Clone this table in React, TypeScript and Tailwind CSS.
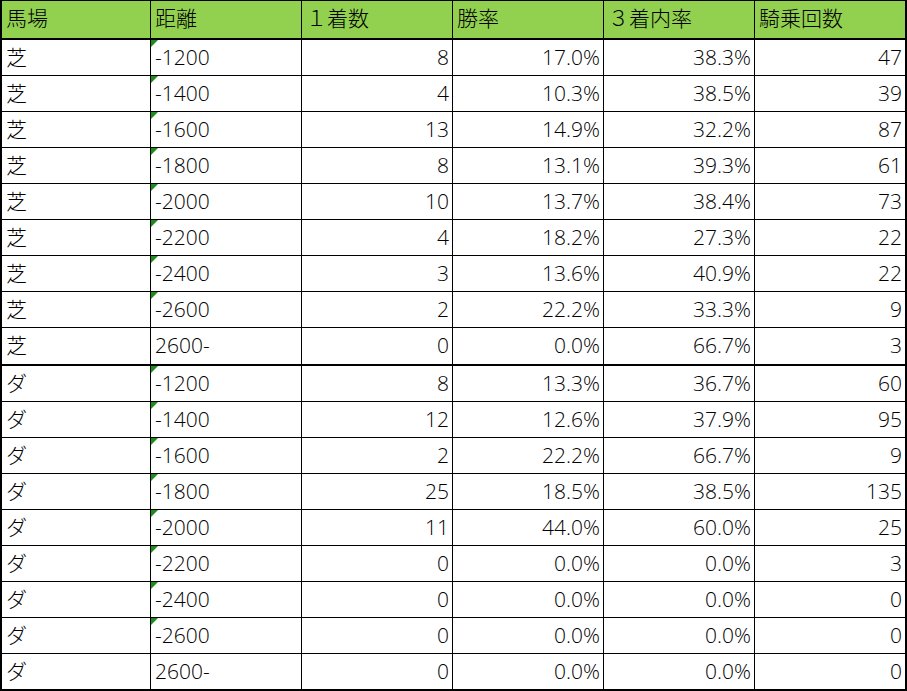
const headers = ["馬場", "距離", "１着数", "勝率", "３着内率", "騎乗回数"];

const widths = ["w-[149px]", "w-[151px]", "w-[151px]", "w-[151px]", "w-[151px]", "w-[150px]"];

type Row = [string, string, number, string, string, number];

const rows: Row[] = [
  ["芝", "-1200", 8, "17.0%", "38.3%", 47],
  ["芝", "-1400", 4, "10.3%", "38.5%", 39],
  ["芝", "-1600", 13, "14.9%", "32.2%", 87],
  ["芝", "-1800", 8, "13.1%", "39.3%", 61],
  ["芝", "-2000", 10, "13.7%", "38.4%", 73],
  ["芝", "-2200", 4, "18.2%", "27.3%", 22],
  ["芝", "-2400", 3, "13.6%", "40.9%", 22],
  ["芝", "-2600", 2, "22.2%", "33.3%", 9],
  ["芝", "2600-", 0, "0.0%", "66.7%", 3],
  ["ダ", "-1200", 8, "13.3%", "36.7%", 60],
  ["ダ", "-1400", 12, "12.6%", "37.9%", 95],
  ["ダ", "-1600", 2, "22.2%", "66.7%", 9],
  ["ダ", "-1800", 25, "18.5%", "38.5%", 135],
  ["ダ", "-2000", 11, "44.0%", "60.0%", 25],
  ["ダ", "-2200", 0, "0.0%", "0.0%", 3],
  ["ダ", "-2400", 0, "0.0%", "0.0%", 0],
  ["ダ", "-2600", 0, "0.0%", "0.0%", 0],
  ["ダ", "2600-", 0, "0.0%", "0.0%", 0],
];

const font = { fontFamily: '"Open Sans", "Noto Sans CJK JP", sans-serif' };

export default function App() {
  return (
    <div className="bg-white w-[907px] h-[691px]" style={font}>
      <div className="w-[907px] border-t border-l-2 border-r-2 border-b-2 border-black text-[21px] font-light text-black leading-none">
        {/* ヘッダー */}
        <div className="flex h-[39px] bg-[#92d050] border-b-2 border-black">
          {headers.map((h, i) => (
            <div
              key={h}
              className={`${widths[i]} shrink-0 flex items-center pl-[4px] pb-[2px] ${i < 5 ? "border-r border-black" : ""}`}
            >
              {h}
            </div>
          ))}
        </div>
        {rows.map((r, ri) => (
          <div
            key={ri}
            className={`flex ${ri === 8 ? "h-[38px] border-b-2" : ri === 17 ? "h-[35px]" : "h-[36px] border-b"} border-black`}
          >
            {r.map((v, ci) => (
              <div
                key={ci}
                className={`${widths[ci]} shrink-0 relative flex items-center pb-[1px] ${ci < 2 ? "justify-start pl-[4px]" : "justify-end pr-[3px]"} ${ci < 5 ? "border-r border-black" : ""}`}
              >
                {ci === 1 && String(v).startsWith("-") && (
                  <div className="absolute left-0 top-0 w-0 h-0 border-t-[7px] border-t-[#1e8c1e] border-r-[7px] border-r-transparent" />
                )}
                {v}
              </div>
            ))}
          </div>
        ))}
      </div>
    </div>
  );
}
